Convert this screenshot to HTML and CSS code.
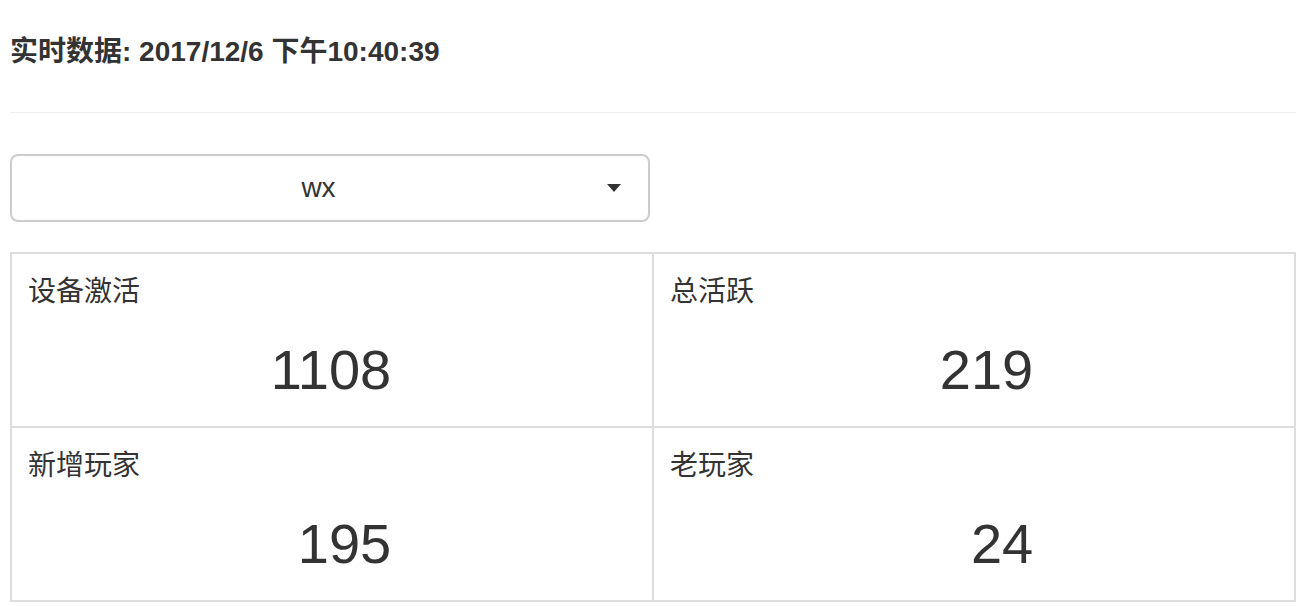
FILE: index.html
```html
<!DOCTYPE html>
<html lang="zh-CN">
<head>
<meta charset="utf-8">
<title>实时数据</title>
<link rel="stylesheet" href="styles.css">
</head>
<body>
<div class="page">
  <h3 class="title">实时数据: 2017/12/6 下午10:40:39</h3>
  <hr class="divider">
  <div class="select">
    <span class="select-text">wx</span>
    <span class="caret"></span>
  </div>
  <div class="stats">
    <div class="cell">
      <div class="label">设备激活</div>
      <div class="value"><span class="num">1108</span></div>
    </div>
    <div class="cell">
      <div class="label">总活跃</div>
      <div class="value"><span class="num">219</span></div>
    </div>
    <div class="cell">
      <div class="label">新增玩家</div>
      <div class="value"><span class="num">195</span></div>
    </div>
    <div class="cell">
      <div class="label">老玩家</div>
      <div class="value"><span class="num">24</span></div>
    </div>
  </div>
</div>
</body>
</html>
```

FILE: styles.css
```css
html, body {
  margin: 0;
  padding: 0;
  background: #fff;
}
body {
  font-family: "Liberation Sans", "Noto Sans CJK SC", sans-serif;
  color: #333;
}
.page {
  padding: 32px 0 0 10px;
}
.title {
  margin: 0;
  font-size: 28px;
  line-height: 40px;
  font-weight: bold;
  color: #333;
}
.divider {
  margin: 40px 0 0 0;
  border: 0;
  border-top: 1px solid #eee;
  height: 0;
}
.select {
  margin-top: 41px;
  width: 640px;
  height: 68px;
  box-sizing: border-box;
  border: 2px solid #ccc;
  border-radius: 8px;
  display: flex;
  align-items: center;
  padding: 0 27px 0 18px;
}
.select-text {
  flex: 1;
  text-align: center;
  font-size: 28px;
  color: #333;
}
.caret {
  width: 0;
  height: 0;
  border-left: 7px solid transparent;
  border-right: 7px solid transparent;
  border-top: 8px solid #333;
}
.stats {
  margin-top: 30px;
  display: grid;
  grid-template-columns: 1fr 1fr;
  border-top: 2px solid #ddd;
  border-left: 2px solid #ddd;
  box-sizing: border-box;
}
.cell {
  border-right: 2px solid #ddd;
  border-bottom: 2px solid #ddd;
  padding: 18px 16px 16px 16px;
  height: 174px;
  box-sizing: border-box;
}
.label {
  font-size: 28px;
  line-height: 40px;
}
.value {
  margin-top: 18px;
  text-align: center;
  font-size: 56px;
  line-height: 80px;
  margin-right: 6px;
}
.num {
  display: inline-block;
  min-width: 2.224em;
  text-align: right;
}
```
